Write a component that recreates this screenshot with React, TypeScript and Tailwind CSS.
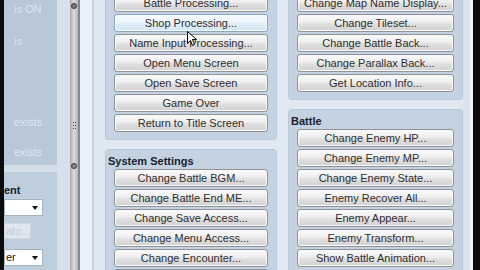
import React from "react";

const btn =
  "flex h-[18px] shrink-0 items-center justify-center rounded-[3px] border border-[#8f9397] bg-[linear-gradient(#fbfbfb_0%,#eeeeee_45%,#e0e0e0_55%,#d2d2d2_100%)] text-[11px] leading-none text-[#2e2e2e] shadow-[inset_0_0_0_1px_#f9f9f9]";
const btnHover =
  "flex h-[18px] shrink-0 items-center justify-center rounded-[3px] border border-[#8aa6c4] bg-[linear-gradient(#f7fbfe_0%,#edf5fc_45%,#dfedf8_55%,#d3e6f5_100%)] text-[11px] leading-none text-[#2e2e2e] shadow-[inset_0_0_0_1px_#fbfdff]";

const processing = [
  "Battle Processing...",
  "Shop Processing...",
  "Name Input Processing...",
  "Open Menu Screen",
  "Open Save Screen",
  "Game Over",
  "Return to Title Screen",
];
const system = [
  "Change Battle BGM...",
  "Change Battle End ME...",
  "Change Save Access...",
  "Change Menu Access...",
  "Change Encounter...",
  "Change Formation Access...",
];
const map = [
  "Change Map Name Display...",
  "Change Tileset...",
  "Change Battle Back...",
  "Change Parallax Back...",
  "Get Location Info...",
];
const battle = [
  "Change Enemy HP...",
  "Change Enemy MP...",
  "Change Enemy State...",
  "Enemy Recover All...",
  "Enemy Appear...",
  "Enemy Transform...",
  "Show Battle Animation...",
];

function Group({ title, items, hover }: { title?: string; items: string[]; hover?: string }) {
  return (
    <div className="flex flex-col rounded-[4px] border border-[#b9c8d7] bg-[#c4d2e1] pb-[7px]">
      {title ? (
        <div className="pl-[2px] pt-[4px] pb-[1px] text-[11px] font-bold leading-[14px] text-[#16222e]">{title}</div>
      ) : (
        <div className="h-[7px]" />
      )}
      <div className="flex flex-col gap-[2px] px-[8px]">
        {items.map((t) => (
          <div key={t} className={t === hover ? btnHover : btn}>
            {t}
          </div>
        ))}
      </div>
    </div>
  );
}

function Dropdown({ text }: { text: string }) {
  return (
    <div className="flex h-[17px] w-[39px] items-center justify-between border border-[#a5b2bf] bg-white pl-[1px] pr-[4px] text-[11px] leading-none text-[#222]">
      <span>{text}</span>
      <svg width="6" height="4" viewBox="0 0 6 4">
        <path d="M0 0h6L3 4z" fill="#111" />
      </svg>
    </div>
  );
}

export default function App() {
  return (
    <div
      className="relative flex h-[270px] w-[480px] overflow-hidden bg-[#e0e9f2]"
      style={{ fontFamily: '"Liberation Sans", Arial, sans-serif' }}
    >
      <div className="w-[4px] bg-[#0b0b0b]" />

      {/* left properties panel */}
      <div className="flex w-[53px] flex-col">
        <div className="h-[165px] bg-[#b8c8d9] pl-[10px] text-[11px] leading-[13px] text-[#dfe6ee]">
          <div className="mt-[3px]">is ON</div>
          <div className="mt-[19px]">is</div>
          <div className="mt-[68px]">exists</div>
          <div className="mt-[17px]">exists</div>
        </div>
        <div className="h-[7px] bg-[#d4dee8]" />
        <div className="flex flex-1 flex-col bg-[#bfcedd] pt-[11px]">
          <div className="text-[11px] font-bold leading-[14px] text-[#17212b]">ent</div>
          <div className="mt-[2px]">
            <Dropdown text="" />
          </div>
          <div className="mt-[7px] flex h-[16px] w-[27px] items-center border border-[#cfd8e1] bg-[#dfe6ed] pl-[1px] text-[11px] leading-none text-[#c3ccd5]">
            ato...
          </div>
          <div className="mt-[10px]">
            <Dropdown text="er" />
          </div>
        </div>
      </div>

      <div className="w-[13px] bg-[#d7e1eb]" />

      {/* splitter grip */}
      <div className="flex w-[8px] flex-col items-center bg-[linear-gradient(90deg,#a9a9a9,#dcdcdc_50%,#b4b4b4)]">
        <div className="mt-[3px] h-[6px] w-[6px] rounded-full border border-[#3a3a3a] bg-[#777]" />
        <div className="mt-[113px] flex flex-col gap-[2px]">
          <div className="flex gap-[1px]">
            <div className="h-[1px] w-[1px] bg-[#444]" />
            <div className="h-[1px] w-[1px] bg-[#444]" />
          </div>
          <div className="flex gap-[1px]">
            <div className="h-[1px] w-[1px] bg-[#444]" />
            <div className="h-[1px] w-[1px] bg-[#444]" />
          </div>
          <div className="flex gap-[1px]">
            <div className="h-[1px] w-[1px] bg-[#444]" />
            <div className="h-[1px] w-[1px] bg-[#444]" />
          </div>
        </div>
        <div className="mt-[34px] h-[6px] w-[6px] rounded-full border border-[#3a3a3a] bg-[#888]" />
      </div>
      <div className="w-[2px] bg-[#7f8a96]" />
      <div className="w-[12px] bg-[#e9f0f7]" />
      <div className="w-[2px] bg-[#c6d3e0]" />
      <div className="w-[11px] bg-[#dde7f1]" />

      {/* middle column */}
      <div className="-mt-[14px] flex w-[172px] flex-col gap-[9px]">
        <Group items={processing} hover="Shop Processing..." />
        <Group title="System Settings" items={system} />
      </div>

      <div className="w-[11px]" />

      {/* right column */}
      <div className="-mt-[14px] flex w-[175px] flex-col gap-[9px]">
        <Group items={map} />
        <Group title="Battle" items={battle} />
      </div>

      <div className="w-[7px] bg-[#d9e3ed]" />
      <div className="w-[3px] bg-[#eef3f8]" />
      <div className="w-[7px] bg-[#0b0b0b]" />

      {/* mouse cursor */}
      <svg className="absolute left-[187px] top-[31px]" width="10" height="16" viewBox="0 0 10 16">
        <path d="M0.5 0.5v12l3-3 2 5 2-1-2-5h4z" fill="#fff" stroke="#000" strokeWidth="1" />
      </svg>
    </div>
  );
}
